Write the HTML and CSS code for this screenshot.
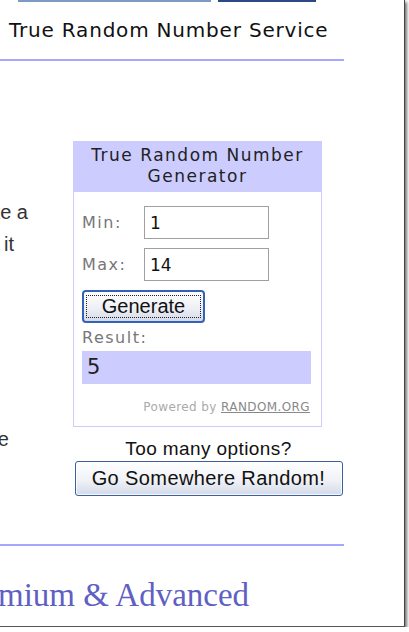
FILE: index.html
```html
<!DOCTYPE html>
<html>
<head>
<meta charset="utf-8">
<link rel="stylesheet" href="styles.css">
</head>
<body>
<div class="frame">
  <div class="topbars">
    <div class="bar bar-light"></div>
    <div class="bar bar-dark"></div>
  </div>
  <h1 class="title">True Random Number Service</h1>
  <div class="rule"></div>
  <div class="main">
    <div class="left">
      <div class="line line1"><span>to make a</span></div>
      <div class="line line2"><span>it</span></div>
      <div class="line line3"><span>the</span></div>
    </div>
    <div class="center">
      <div class="widget">
        <div class="widget-head">True Random Number<br>Generator</div>
        <div class="widget-body">
          <div class="field">
            <span class="label">Min:</span>
            <div class="input">1</div>
          </div>
          <div class="field">
            <span class="label">Max:</span>
            <div class="input">14</div>
          </div>
          <button class="gen"><span class="focus">Generate</span></button>
          <div class="result-label">Result:</div>
          <div class="result">5</div>
          <div class="powered">Powered by <span class="link">RANDOM.ORG</span></div>
        </div>
      </div>
      <div class="options">Too many options?</div>
      <button class="go">Go Somewhere Random!</button>
    </div>
  </div>
  <div class="rule rule2"></div>
  <div class="premium">Premium &amp; Advanced</div>
</div>
</body>
</html>
```
FILE: styles.css
```css
html, body {
  margin: 0;
  padding: 0;
  background: #fff;
}
.frame {
  position: relative;
  width: 404px;
  height: 626px;
  overflow: hidden;
  background: #fff;
  border-right: 1px solid #444;
  border-bottom: 1px solid #555;
  box-shadow: 2px 2px 3px rgba(0,0,0,0.55);
  font-family: "DejaVu Sans", Verdana, sans-serif;
}
.topbars {
  display: flex;
  margin-left: 18px;
  gap: 7px;
}
.bar {
  height: 2px;
}
.bar-light {
  width: 193px;
  background: #7d9ac4;
}
.bar-dark {
  width: 98px;
  background: #2b4a85;
}
.title {
  margin: 16px 0 0 9px;
  font-weight: normal;
  font-size: 20px;
  letter-spacing: 0.8px;
  line-height: 24px;
  color: #111;
}
.rule {
  width: 344px;
  height: 2px;
  background: #a6a6ff;
  margin-top: 17px;
}
.main {
  display: flex;
  margin-top: 80px;
}
.left {
  width: 73px;
  flex: none;
  font-family: "Liberation Sans", Arial, sans-serif;
  font-size: 20px;
  line-height: 23px;
  color: #333;
}
.line {
  display: flex;
  justify-content: flex-end;
  white-space: nowrap;
}
.line1 { margin-top: 60px; margin-right: 45px; }
.line2 { margin-top: 9px; margin-right: 59px; }
.line3 { margin-top: 172px; margin-right: 64px; }
.center {
  width: 271px;
  display: flex;
  flex-direction: column;
  align-items: center;
}
.widget {
  align-self: flex-start;
  width: 247px;
  border: 1px solid #ccccff;
}
.widget-head {
  background: #ccccff;
  text-align: center;
  font-size: 17px;
  letter-spacing: 1.5px;
  line-height: 21px;
  padding: 3px 0 5px;
  color: #222;
}
.widget-body {
  padding: 14px 9px 12px 8px;
}
.field {
  display: flex;
  align-items: center;
  margin-bottom: 9px;
}
.label {
  width: 62px;
  font-size: 16px;
  letter-spacing: 1.5px;
  color: #777;
}
.input {
  box-sizing: border-box;
  height: 33px;
  width: 125px;
  border: 1px solid #a0a0a0;
  padding: 4px 5px;
  font-size: 17px;
  line-height: 24px;
  color: #111;
}
.gen {
  display: block;
  margin-top: 2px;
  width: 123px;
  height: 33px;
  padding: 2px;
  border: 2px solid #3562b8;
  border-radius: 4px;
  background: linear-gradient(#ffffff, #eceef4 60%, #d4dae8);
  font-family: "Liberation Sans", Arial, sans-serif;
  font-size: 20px;
  color: #111;
  cursor: pointer;
}
.focus {
  display: block;
  border: 1px dotted #222;
  line-height: 21px;
  padding: 0 2px;
}
.result-label {
  margin-top: 5px;
  font-size: 16px;
  letter-spacing: 1.5px;
  line-height: 20px;
  color: #777;
}
.result {
  margin-top: 3px;
  width: 229px;
  height: 33px;
  box-sizing: border-box;
  background: #ccccff;
  padding: 3px 5px;
  font-size: 21px;
  line-height: 27px;
  color: #222;
}
.powered {
  margin-top: 16px;
  text-align: right;
  padding-right: 2px;
  font-size: 12px;
  letter-spacing: 0.4px;
  color: #aaa;
}
.link {
  color: #888;
  text-decoration: underline;
}
.options {
  margin-top: 11px;
  font-family: "Liberation Sans", Arial, sans-serif;
  font-size: 19px;
  letter-spacing: 0.4px;
  line-height: 22px;
  color: #111;
}
.go {
  margin-top: 1px;
  width: 268px;
  height: 35px;
  border: 1px solid #3d5f9c;
  border-radius: 3px;
  background: linear-gradient(#ffffff, #f0f2f7 55%, #d3dae8);
  box-shadow: inset 0 0 0 1px rgba(255,255,255,0.8);
  font-family: "Liberation Sans", Arial, sans-serif;
  font-size: 20px;
  letter-spacing: 0.4px;
  color: #111;
  cursor: pointer;
}
.rule2 {
  margin-top: 48px;
}
.premium {
  margin-top: 31px;
  margin-left: -46px;
  white-space: nowrap;
  font-family: "Liberation Serif", Georgia, serif;
  font-size: 33px;
  color: #6060c4;
}
```
